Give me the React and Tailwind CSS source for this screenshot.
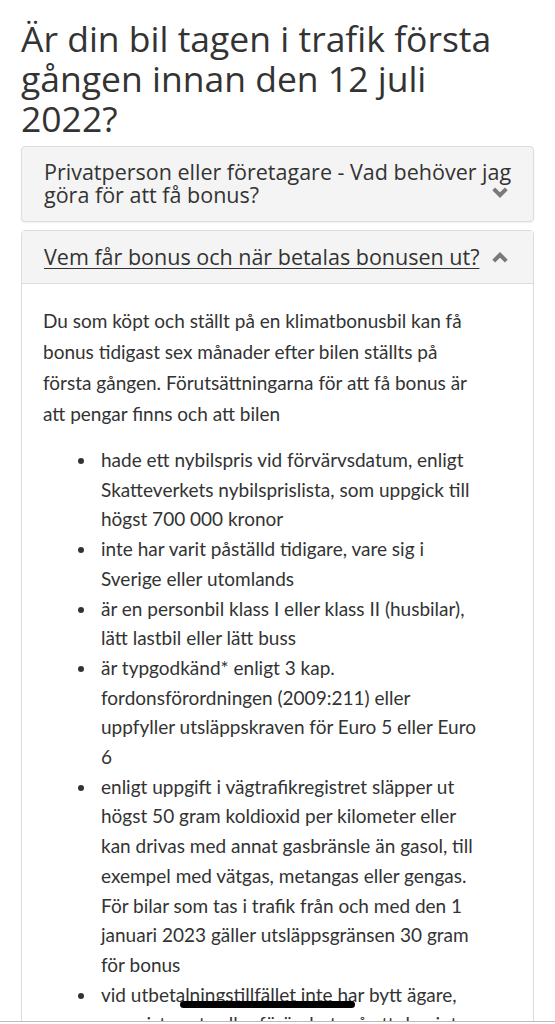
import React from 'react';

// radbrytningar som i förlagan
const intro = [
  'Du som köpt och ställt på en klimatbonusbil kan få',
  'bonus tidigast sex månader efter bilen ställts på',
  'första gången. Förutsättningarna för att få bonus är',
  'att pengar finns och att bilen',
];

const items = [
  ['hade ett nybilspris vid förvärvsdatum, enligt', 'Skatteverkets nybilsprislista, som uppgick till', 'högst 700 000 kronor'],
  ['inte har varit påställd tidigare, vare sig i', 'Sverige eller utomlands'],
  ['är en personbil klass I eller klass II (husbilar),', 'lätt lastbil eller lätt buss'],
  ['är typgodkänd* enligt 3 kap.', 'fordonsförordningen (2009:211) eller', 'uppfyller utsläppskraven för Euro 5 eller Euro', '6'],
  [
    'enligt uppgift i vägtrafikregistret släpper ut',
    'högst 50 gram koldioxid per kilometer eller',
    'kan drivas med annat gasbränsle än gasol, till',
    'exempel med vätgas, metangas eller gengas.',
    'För bilar som tas i trafik från och med den 1',
    'januari 2023 gäller utsläppsgränsen 30 gram',
    'för bonus',
  ],
  ['vid utbetalningstillfället inte har bytt ägare,', 'avregistrerats eller förändrats så att den inte', 'längre uppfyller kraven'],
];

const Lines = ({ lines }) =>
  lines.map((l, i) => (
    <React.Fragment key={i}>
      {i > 0 && <br />}
      {l}
    </React.Fragment>
  ));

const Chevron = ({ up }) => (
  <svg viewBox="0 0 20 14" className="w-[18px] h-[13px] shrink-0" fill="none">
    <path
      d={up ? 'M3 11 L10 4 L17 11' : 'M3 3 L10 10 L17 3'}
      stroke="#7a7a7a"
      strokeWidth="4.5"
      strokeLinecap="butt"
      strokeLinejoin="miter"
    />
  </svg>
);

export default function App() {
  return (
    <div className="relative h-[1024px] overflow-hidden bg-white text-[#333]">
      <div className="px-[21px] pt-[18px]">
        {/* rubrik */}
        <h1 className="pr-[10px] text-[35.5px] leading-[40px] font-normal text-[#333] [font-family:'Open_Sans',sans-serif]">
          Är din bil tagen i trafik första gången innan den 12 juli 2022?
        </h1>

        {/* accordion */}
        <div className="mt-[8px] flex flex-col gap-[8px] [font-family:'Open_Sans',sans-serif]">
          <div className="relative rounded-[4px] border border-[#dcdcdc] bg-[#f4f4f4] shadow-[0_1px_2px_rgba(0,0,0,0.06)]">
            <div className="pl-[22px] pr-[12px] pt-[13px] pb-[15px] text-[21.5px] leading-[23px]">
              Privatperson eller företagare - Vad behöver jag göra för att få bonus?
            </div>
            <div className="absolute right-[24px] bottom-[22px]">
              <Chevron />
            </div>
          </div>

          <div className="rounded-t-[4px] border border-[#dcdcdc]">
            <div className="flex items-center justify-between bg-[#f4f4f4] border-b border-[#dcdcdc] pl-[22px] pr-[24px] h-[53px]">
              <span className="text-[21.5px] underline underline-offset-[3px] decoration-1">
                Vem får bonus och när betalas bonusen ut?
              </span>
              <Chevron up />
            </div>
            <div className="pl-[21px] pr-[8px] pt-[21px] pb-[40px] [font-family:Lato,sans-serif] text-[19px] leading-[31px] whitespace-nowrap">
              <p>
                <Lines lines={intro} />
              </p>
              <ul className="mt-[16px] pl-[54px] list-disc leading-[29.7px] marker:text-[#333]">
                {items.map((t, i) => (
                  <li key={i} className="pl-[4px]">
                    <Lines lines={t} />
                  </li>
                ))}
              </ul>
            </div>
          </div>
        </div>
      </div>

      {/* home indicator */}
      <div className="absolute left-[180px] top-[1001px] h-[7px] w-[175px] rounded-full bg-black" />
      <div className="absolute left-0 right-0 top-[1021px] h-[3px] bg-white border-t border-[#bbb]" />
    </div>
  );
}
